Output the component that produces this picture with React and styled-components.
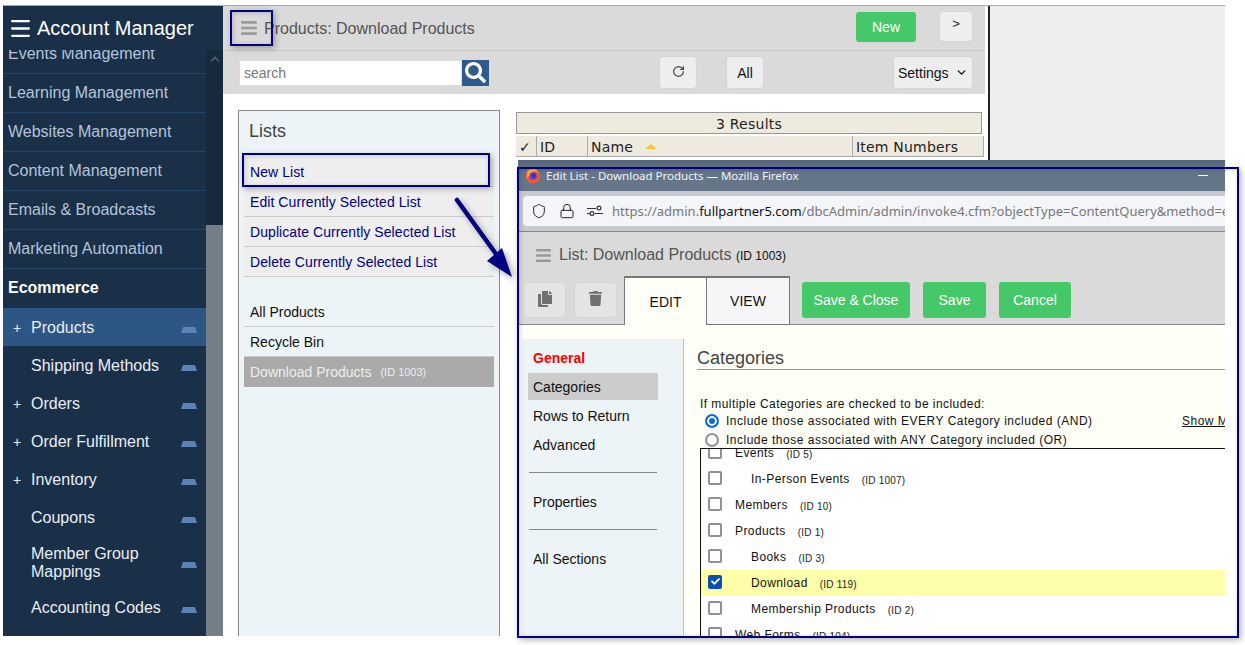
import React from 'react'
import styled, { createGlobalStyle } from 'styled-components'
import { FaBars, FaSearch, FaCopy, FaTrash, FaCheck } from 'react-icons/fa'
import { RotateCw, ChevronDown, ChevronUp, Shield, Lock, Menu } from 'lucide-react'

const GlobalStyle = createGlobalStyle`
  html, body {
    margin: 0;
    padding: 0;
    background: #fff;
    overflow: hidden;
    font-family: 'Liberation Sans', Arial, sans-serif;
  }
  * { box-sizing: border-box; }
`

const navLinks = ['Events Management', 'Learning Management', 'Websites Management', 'Content Management', 'Emails & Broadcasts', 'Marketing Automation']
const subLinks = [
  { label: 'Products', plus: true, active: true },
  { label: 'Shipping Methods' },
  { label: 'Orders', plus: true },
  { label: 'Order Fulfillment', plus: true },
  { label: 'Inventory', plus: true },
  { label: 'Coupons' },
  { label: 'Member Group Mappings', tall: true },
  { label: 'Accounting Codes' },
]
const categories = [
  { name: 'Events', id: 5 },
  { name: 'In-Person Events', id: 1007, child: true },
  { name: 'Members', id: 10 },
  { name: 'Products', id: 1 },
  { name: 'Books', id: 3, child: true },
  { name: 'Download', id: 119, child: true, checked: true },
  { name: 'Membership Products', id: 2, child: true },
  { name: 'Web Forms', id: 104 },
]

const TrapezoidIcon = () => (
  <svg width="16" height="6" viewBox="0 0 16 6" style={{ marginTop: 3, flex: 'none' }}><polygon points="2,0 14,0 16,6 0,6" fill="#5b83b8" /></svg>
)

const FirefoxIcon = () => (
  <svg width="16" height="16" viewBox="0 0 16 16" style={{ flex: 'none' }}>
    <circle cx="8" cy="8.4" r="7.2" fill="#f0563a" />
    <path d="M2 3 C3 6 1.5 8 2 10 L8 4 C10 3 12 3 14 6 C13 2 10 .8 8 1 C6 1 4 1.5 2 3Z" fill="#ffb02e" />
    <circle cx="8.2" cy="8" r="3.8" fill="#6a3fc4" />
    <circle cx="8.8" cy="7.6" r="1.8" fill="#3d2a9c" />
  </svg>
)

const SlidersIcon = () => (
  <svg width="16" height="12" viewBox="0 0 16 12" fill="none" stroke="#333" strokeWidth="1.2" style={{ flex: 'none' }}>
    <path d="M0 3.5h9M0 8.5h3M8 8.5h8" />
    <circle cx="12" cy="3" r="1.9" />
    <circle cx="5" cy="8.5" r="1.9" />
  </svg>
)

const App = () => (
  <Page>
    <GlobalStyle />
    <Shell>
      <Sidebar>
        <Brand><Menu size={25} strokeWidth={2.2} />Account Manager</Brand>
        <NavArea>
          <NavList>
            {navLinks.map((l) => <NavLink key={l}>{l}</NavLink>)}
            <NavHeading>Ecommerce</NavHeading>
            {subLinks.map((s) => (
              <SubLink key={s.label} $active={s.active} $tall={s.tall}>
                <PlusMark>{s.plus ? '+' : ''}</PlusMark>
                <SubLabel>{s.label}</SubLabel>
                <TrapezoidIcon />
              </SubLink>
            ))}
          </NavList>
          <NavScroll>
            <ScrollUp><ChevronUp size={14} strokeWidth={3} /></ScrollUp>
          </NavScroll>
        </NavArea>
      </Sidebar>

      <Main>
        <TopBar>
          <MenuLines size={18} />
          <PageTitle>Products: Download Products</PageTitle>
          <NewButton>New</NewButton>
          <GreyButton $w={34} $h={31}>&gt;</GreyButton>
        </TopBar>
        <SearchBar>
          <SearchInput placeholder="search" readOnly />
          <SearchButton><FaSearch size={21} /></SearchButton>
          <RefreshButton><RotateCw size={13} strokeWidth={2.2} /></RefreshButton>
          <AllButton>All</AllButton>
          <SettingsButton>Settings<ChevronDown size={13} strokeWidth={2.5} /></SettingsButton>
        </SearchBar>
        <Content>
          <ListsPanel>
            <ListsTitle>Lists</ListsTitle>
            <ListGroup>
              <ActionItem>New List</ActionItem>
              <ActionItem>Edit Currently Selected List</ActionItem>
              <ActionItem>Duplicate Currently Selected List</ActionItem>
              <ActionItem>Delete Currently Selected List</ActionItem>
            </ListGroup>
            <ListGroup $gap>
              <PlainItem>All Products</PlainItem>
              <PlainItem>Recycle Bin</PlainItem>
              <PlainItem $selected>Download Products<SmallId>(ID 1003)</SmallId></PlainItem>
            </ListGroup>
          </ListsPanel>
          <ResultsArea>
            <ResultsCount>3 Results</ResultsCount>
            <HeaderRow>
              <HeaderCell $w={21}>✓</HeaderCell>
              <HeaderCell $w={51}>ID</HeaderCell>
              <HeaderCell $w={265}>Name<SortMark /></HeaderCell>
              <HeaderCell $w={131}>Item Numbers</HeaderCell>
            </HeaderRow>
          </ResultsArea>
        </Content>
      </Main>

      <Divider />
      <SidePanel />
    </Shell>

    <PopupWindow>
      <TitleBar>
        <FirefoxIcon />
        <TitleText>Edit List - Download Products — Mozilla Firefox</TitleText>
        <Minimize />
      </TitleBar>
      <AddressBar>
        <UrlField>
          <Shield size={16} strokeWidth={1.5} color="#222" style={{ flex: 'none' }} />
          <Lock size={16} strokeWidth={1.5} color="#222" style={{ flex: 'none' }} />
          <SlidersIcon />
          <UrlText>https://admin.<b>fullpartner5.com</b>/dbcAdmin/admin/invoke4.cfm?objectType=ContentQuery&amp;method=edit</UrlText>
        </UrlField>
      </AddressBar>
      <PopupHead>
        <PopupTitleRow>
          <MenuLines size={17} />
          <PopupTitle>List: Download Products <small>(ID 1003)</small></PopupTitle>
        </PopupTitleRow>
        <PopupTools>
          <IconButton><FaCopy size={16} /></IconButton>
          <IconButton><FaTrash size={15} /></IconButton>
          <Tabs>
            <Tab $active>EDIT</Tab>
            <Tab>VIEW</Tab>
          </Tabs>
          <SaveButton $w={108}>Save &amp; Close</SaveButton>
          <SaveButton $w={63}>Save</SaveButton>
          <SaveButton $w={72}>Cancel</SaveButton>
        </PopupTools>
      </PopupHead>
      <PopupBody>
        <SectionNav>
          <SectionHead>General</SectionHead>
          <SectionLink $active>Categories</SectionLink>
          <SectionLink>Rows to Return</SectionLink>
          <SectionLink>Advanced</SectionLink>
          <SectionRule />
          <SectionLink>Properties</SectionLink>
          <SectionRule />
          <SectionLink>All Sections</SectionLink>
        </SectionNav>
        <Form>
          <FormHeading>Categories</FormHeading>
          <FormNote>If multiple Categories are checked to be included:</FormNote>
          <RadioRow>
            <Radio $on />
            Include those associated with EVERY Category included (AND)
            <ShowMore>Show More</ShowMore>
          </RadioRow>
          <RadioRow>
            <Radio />
            Include those associated with ANY Category included (OR)
          </RadioRow>
          <CategoryBox>
            {categories.map((c) => (
              <CategoryRow key={c.id} $checked={c.checked}>
                <CheckBox $checked={c.checked}>{c.checked && <FaCheck size={9} />}</CheckBox>
                <CategoryName $child={c.child}>{c.name}</CategoryName>
                <CategoryId>(ID {c.id})</CategoryId>
              </CategoryRow>
            ))}
          </CategoryBox>
        </Form>
      </PopupBody>
    </PopupWindow>

    <Callout $x={230} $y={10} $w={43} $h={36} />
    <Callout $x={242} $y={153} $w={248} $h={34} />
    <Callout $x={517} $y={167} $w={722} $h={471} />
    <Arrow width="70" height="90" viewBox="0 0 70 90">
      <path d="M5 4 L44 58" stroke="#000080" strokeWidth="4.5" strokeLinecap="round" />
      <polygon points="35,65 50,52 60,81" fill="#000080" />
    </Arrow>
  </Page>
)

const Page = styled.div`
  position: relative;
  width: 1245px;
  height: 645px;
  padding: 5px 20px 9px 3px;
  overflow: hidden;
`

const Shell = styled.div`
  display: flex;
  height: 631px;
  border-top: 1px solid #aaa;
`

const Sidebar = styled.aside`
  width: 220px;
  display: flex;
  flex-direction: column;
  background: #1a2f48;
`

const Brand = styled.div`
  height: 44px;
  flex: none;
  display: flex;
  align-items: center;
  gap: 4px;
  padding: 0 0 0 5px;
  position: relative;
  z-index: 1;
  background: #1a2f48;
  color: #fff;
  font-size: 20px;
`

const NavArea = styled.div`
  flex: 1;
  display: flex;
  min-height: 0;
  overflow: hidden;
`

const NavList = styled.nav`
  width: 203px;
  margin-top: -15px;
`

const NavLink = styled.div`
  height: 39px;
  padding-left: 5px;
  display: flex;
  align-items: center;
  color: #b4c4d9;
  font-size: 16px;
  border-bottom: 1px solid #254469;
`

const NavHeading = styled.div`
  height: 39px;
  padding: 0 0 2px 5px;
  display: flex;
  align-items: center;
  color: #fff;
  font-size: 16px;
  font-weight: bold;
`

const SubLink = styled.div`
  height: ${(p) => (p.$tall ? '52px' : '38px')};
  display: flex;
  align-items: center;
  padding: 2px 9px 0 10px;
  color: #e9eef5;
  font-size: 16px;
  line-height: 18px;
  background: ${(p) => (p.$active ? '#2c5684' : 'transparent')};
`

const PlusMark = styled.span`
  width: 18px;
  flex: none;
  font-size: 14px;
`

const SubLabel = styled.span`
  flex: 1;
  max-width: 145px;
  margin-right: auto;
`

const NavScroll = styled.div`
  width: 17px;
  background: linear-gradient(#17293c 175px, #757f88 175px);
`

const ScrollUp = styled.div`
  height: 17px;
  display: flex;
  align-items: center;
  justify-content: center;
  color: #51606f;
`

const Main = styled.main`
  width: 762px;
  display: flex;
  flex-direction: column;
  background: #fff;
`

const TopBar = styled.header`
  height: 45px;
  flex: none;
  display: flex;
  align-items: center;
  padding: 0 12px 0 17px;
  background: #dadada;
  border-bottom: 1px solid #c8c8c8;
`

const MenuLines = styled(FaBars)`
  flex: none;
  color: #999;
`

const PageTitle = styled.h1`
  flex: 1;
  margin: 2px 0 0 6px;
  font-size: 16px;
  font-weight: normal;
  color: #555;
`

const GreyButton = styled.button`
  width: ${(p) => p.$w}px;
  height: ${(p) => p.$h}px;
  margin-top: -3px;
  padding: 0 0 6px;
  border: 1px solid #d5d5d5;
  border-radius: 4px;
  background: #eee;
  color: #222;
  font: 13px 'Liberation Sans', Arial, sans-serif;
`

const NewButton = styled.button`
  width: 60px;
  height: 30px;
  margin: -2px 23px 0 0;
  border: 0;
  border-radius: 3px;
  background: #45c968;
  color: #fff;
  font: 14px 'Liberation Sans', Arial, sans-serif;
`

const SearchBar = styled.div`
  height: 43px;
  flex: none;
  display: flex;
  align-items: center;
  padding: 0 12px 0 16px;
  background: #dadada;
`

const SearchInput = styled.input`
  width: 223px;
  height: 26px;
  padding: 0 4px;
  border: 1px solid #ddd;
  background: #fff;
  font: 14px 'Liberation Sans', Arial, sans-serif;
  &::placeholder { color: #777; }
`

const SearchButton = styled.div`
  width: 27px;
  height: 26px;
  display: flex;
  align-items: center;
  justify-content: center;
  background: #2e5a8e;
  color: #fff;
`

const RefreshButton = styled.button`
  width: 38px;
  height: 33px;
  margin-left: 170px;
  padding: 0;
  border: 1px solid #d5d5d5;
  border-radius: 4px;
  background: #eee;
  color: #444;
`

const AllButton = styled(RefreshButton)`
  margin-left: 29px;
  color: #111;
  font: 14px 'Liberation Sans', Arial, sans-serif;
`

const SettingsButton = styled.button`
  width: 80px;
  height: 33px;
  margin-left: 129px;
  padding: 0 4px;
  display: flex;
  align-items: center;
  justify-content: space-between;
  border: 1px solid #d5d5d5;
  border-radius: 4px;
  background: #eee;
  color: #111;
  font: 14px 'Liberation Sans', Arial, sans-serif;
`

const Content = styled.div`
  flex: 1;
  display: flex;
  align-items: stretch;
  padding: 16px 0 0 15px;
`

const ListsPanel = styled.section`
  width: 262px;
  padding: 0 5px;
  background: #ecf4f7;
  border: 1px solid #888;
  border-bottom: 0;
`

const ListsTitle = styled.h2`
  margin: 0;
  height: 46px;
  padding: 10px 5px 0;
  font-size: 18px;
  font-weight: normal;
  color: #444;
`

const ListGroup = styled.div`
  margin-top: ${(p) => (p.$gap ? '20px' : '0')};
`

const ActionItem = styled.div`
  height: 30px;
  padding-left: 6px;
  display: flex;
  align-items: center;
  background: #eee;
  color: #000080;
  font-size: 14px;
  letter-spacing: 0.07px;
  border-bottom: 1px solid #ccc;
`

const PlainItem = styled.div`
  height: 30px;
  padding-left: 6px;
  display: flex;
  align-items: center;
  font-size: 14px;
  color: ${(p) => (p.$selected ? '#eee' : '#111')};
  background: ${(p) => (p.$selected ? '#aaa' : 'transparent')};
  border-bottom: ${(p) => (p.$selected ? '0' : '1px solid #ccc')};
`

const SmallId = styled.span`
  margin-left: 9px;
  font-size: 11px;
`

const ResultsArea = styled.div`
  width: 468px;
  margin: 2px 0 0 16px;
`

const ResultsCount = styled.div`
  width: 466px;
  height: 22px;
  padding-top: 2px;
  display: flex;
  align-items: center;
  justify-content: center;
  background: #eeeadf;
  border: 1px solid #999;
  color: #222;
  font: 14px 'DejaVu Sans', Verdana, sans-serif;
  letter-spacing: 0.25px;
`

const HeaderRow = styled.div`
  display: flex;
  margin-top: 2px;
  height: 21px;
  background: #eeeadf;
  border-bottom: 1px solid #aaa;
`

const HeaderCell = styled.div`
  width: ${(p) => p.$w}px;
  padding: 1px 0 0 3px;
  display: flex;
  align-items: center;
  border-right: 1px solid #aaa;
  color: #222;
  font: 14px 'DejaVu Sans', Verdana, sans-serif;
  letter-spacing: 0.2px;
`

const SortMark = styled.span`
  width: 0;
  height: 0;
  margin-left: 12px;
  border: 6px solid transparent;
  border-top: 0;
  border-bottom: 5px solid #f5c63a;
`

const Divider = styled.div`
  width: 2px;
  margin-left: 3px;
  background: #222;
`

const SidePanel = styled.div`
  flex: 1;
  background: #eee;
`

const PopupWindow = styled.div`
  position: absolute;
  left: 518px;
  top: 160px;
  width: 707px;
  height: 476px;
  display: flex;
  flex-direction: column;
  overflow: hidden;
  background: #fffff8;
`

const TitleBar = styled.div`
  height: 31px;
  flex: none;
  display: flex;
  align-items: center;
  gap: 5px;
  padding: 0 17px 0 7px;
  background: linear-gradient(#55657a, #667689 8px);
`

const TitleText = styled.span`
  flex: 1;
  color: #f2f4f7;
  font: 11.5px 'Noto Sans', sans-serif;
`

const Minimize = styled.span`
  width: 10px;
  height: 1px;
  background: #fff;
`

const AddressBar = styled.div`
  height: 41px;
  flex: none;
  padding: 5px 0 5px 5px;
  background: #c7cad1;
  border-bottom: 1px solid #888;
`

const UrlField = styled.div`
  height: 30px;
  display: flex;
  align-items: center;
  gap: 12px;
  padding-left: 8px;
  overflow: hidden;
  white-space: nowrap;
  background: #f4f5f9;
  border-radius: 4px 0 0 4px;
`

const UrlText = styled.span`
  flex: none;
  margin-left: -3px;
  color: #777;
  font: 13px 'Noto Sans', sans-serif;
  b { color: #111; font-weight: normal; }
`

const PopupHead = styled.div`
  height: 93px;
  flex: none;
  background: #dadada;
  border-bottom: 1px solid #888;
`

const PopupTitleRow = styled.div`
  height: 44px;
  padding: 2px 0 0 17px;
  display: flex;
  align-items: center;
  gap: 7px;
`

const PopupTitle = styled.h2`
  margin: 0;
  font-size: 16px;
  font-weight: normal;
  color: #555;
  small { font-size: 12px; color: #111; }
`

const PopupTools = styled.div`
  height: 49px;
  display: flex;
  align-items: flex-start;
  padding-left: 5px;
`

const IconButton = styled.button`
  width: 43px;
  height: 36px;
  margin: 6px 8px 0 0;
  padding: 0;
  border: 1px solid #d5d5d5;
  border-radius: 4px;
  background: #e4e4e4;
  color: #707070;
`

const Tabs = styled.div`
  display: flex;
  height: 49px;
  margin-right: 12px;
  margin-left: -1px;
`

const Tab = styled.div`
  width: 83px;
  display: flex;
  align-items: center;
  justify-content: center;
  border: 1px solid #777;
  border-top-width: 2px;
  border-left-width: ${(p) => (p.$active ? '1px' : '0')};
  border-bottom: ${(p) => (p.$active ? '0' : '1px solid #777')};
  background: ${(p) => (p.$active ? '#fffff8' : '#f6f6f8')};
  color: #111;
  font-size: 14px;
`

const SaveButton = styled.button`
  width: ${(p) => p.$w}px;
  height: 36px;
  margin: 6px 13px 0 0;
  padding: 0;
  border: 0;
  border-radius: 3px;
  background: #45c968;
  color: #fff;
  font: 14px 'Liberation Sans', Arial, sans-serif;
`

const PopupBody = styled.div`
  flex: 1;
  min-height: 0;
  display: flex;
  padding: 14px 0 0 4px;
`

const SectionNav = styled.div`
  width: 162px;
  flex: none;
  padding: 4px 6px;
  background: #ecf4f7;
  border-right: 1px solid #bbb;
`

const SectionHead = styled.div`
  height: 30px;
  padding-left: 5px;
  display: flex;
  align-items: center;
  color: #f00;
  font-size: 14px;
  font-weight: bold;
`

const SectionLink = styled.div`
  width: 130px;
  height: ${(p) => (p.$active ? '27px' : '29px')};
  margin-bottom: ${(p) => (p.$active ? '1px' : '0')};
  padding-left: 5px;
  display: flex;
  align-items: center;
  color: #111;
  font-size: 14px;
  background: ${(p) => (p.$active ? '#ccc' : 'transparent')};
`

const SectionRule = styled.div`
  width: 128px;
  height: 1px;
  margin: 13px 0 14px 1px;
  background: #888;
`

const Form = styled.div`
  flex: 1;
  min-width: 0;
  display: flex;
  flex-direction: column;
  padding-left: 13px;
`

const FormHeading = styled.h3`
  margin: 0 0 27px;
  height: 31px;
  flex: none;
  padding-top: 9px;
  border-bottom: 1px solid #999;
  font-size: 18px;
  font-weight: normal;
  color: #444;
`

const FormNote = styled.div`
  height: 14px;
  flex: none;
  padding-left: 3px;
  color: #111;
  font-size: 12px;
  letter-spacing: 0.44px;
`

const RadioRow = styled.div`
  position: relative;
  height: 19px;
  flex: none;
  display: flex;
  align-items: center;
  gap: 7px;
  padding-left: 8px;
  white-space: nowrap;
  color: #111;
  font-size: 12px;
  letter-spacing: 0.5px;
`

const Radio = styled.span`
  width: 14px;
  height: 14px;
  flex: none;
  border-radius: 50%;
  border: 2px solid ${(p) => (p.$on ? '#0f6bdc' : '#8f8f9d')};
  background: ${(p) => (p.$on ? '#0f6bdc' : '#fff')};
  box-shadow: inset 0 0 0 2px #fff;
`

const ShowMore = styled.span`
  position: absolute;
  left: 485px;
  text-decoration: underline;
`

const CategoryBox = styled.div`
  flex: 1;
  min-height: 0;
  margin: -1px 0 0 3px;
  overflow: hidden;
  background: #fff;
  border: 1px solid #111;
  border-width: 1px 0 0 1px;
`

const CategoryRow = styled.div`
  height: 26px;
  display: flex;
  align-items: center;
  padding-left: 7px;
  background: ${(p) => (p.$checked ? '#ffffaa' : 'transparent')};
  &:first-child { margin-top: -9px; }
`

const CheckBox = styled.span`
  width: 14px;
  height: 14px;
  flex: none;
  display: flex;
  align-items: center;
  justify-content: center;
  margin-top: -3px;
  border-radius: 2px;
  border: 2px solid ${(p) => (p.$checked ? '#0b4fb4' : '#8f8f9d')};
  background: ${(p) => (p.$checked ? '#0b4fb4' : '#fff')};
  color: #fff;
`

const CategoryName = styled.span`
  margin-left: ${(p) => (p.$child ? '29px' : '13px')};
  color: #111;
  font-size: 12px;
  letter-spacing: 0.42px;
`

const CategoryId = styled.span`
  margin-left: 12px;
  margin-top: 2px;
  color: #222;
  font-size: 10px;
  letter-spacing: 0.2px;
`

const Callout = styled.div`
  position: absolute;
  left: ${(p) => p.$x}px;
  top: ${(p) => p.$y}px;
  width: ${(p) => p.$w}px;
  height: ${(p) => p.$h}px;
  border: 2px solid #000080;
  box-shadow: 2px 2px 6px rgba(0, 0, 0, 0.3), inset 1px 1px 5px rgba(0, 0, 0, 0.18);
  pointer-events: none;
`

const Arrow = styled.svg`
  position: absolute;
  left: 452px;
  top: 196px;
  filter: drop-shadow(3px 3px 3px rgba(0, 0, 0, 0.35));
`

export default App
